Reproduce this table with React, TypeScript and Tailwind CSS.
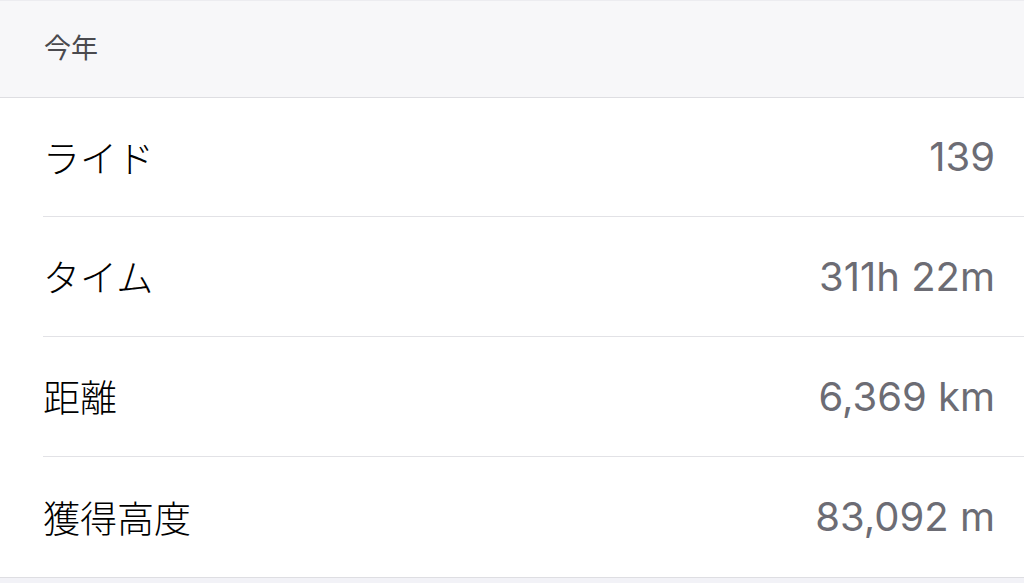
import React from "react";

const rows = [
  { label: "ライド", value: "139" },
  { label: "タイム", value: "311h 22m" },
  { label: "距離", value: "6,369 km" },
  { label: "獲得高度", value: "83,092 m" },
];

export default function App() {
  return (
    <div
      className="w-[1024px] h-[583px] bg-[#f2f2f7] overflow-hidden"
      style={{ fontFamily: '"Inter", "Noto Sans CJK JP", sans-serif' }}
    >
      <div className="h-[98px] bg-[#f7f7f9] border-t border-t-[#ececf0] border-b border-b-[#dedee2] flex items-center pl-[44px] pb-[3px]">
        <span
          className="text-[27px] text-[#4a4a4e]"
          style={{ fontFamily: '"Noto Sans CJK JP", sans-serif' }}
        >
          今年
        </span>
      </div>
      <div className="bg-white border-b border-b-[#dedee2]">
        {rows.map((r, i) => (
          <div key={r.label} className="pl-[43px]">
            <div
              className={
                "flex items-center justify-between pr-[29px] " +
                (i === 0 ? "h-[119px] " : "h-[120px] ") +
                (i < rows.length - 1 ? "border-b border-b-[#e2e2e6]" : "")
              }
            >
              <span
                className="text-[37px] font-light text-black leading-none"
                style={{ fontFamily: '"Noto Sans CJK JP", sans-serif' }}
              >
                {r.label}
              </span>
              <span className="text-[40px] text-[#6c6c74] leading-none">
                {r.value}
              </span>
            </div>
          </div>
        ))}
      </div>
    </div>
  );
}
